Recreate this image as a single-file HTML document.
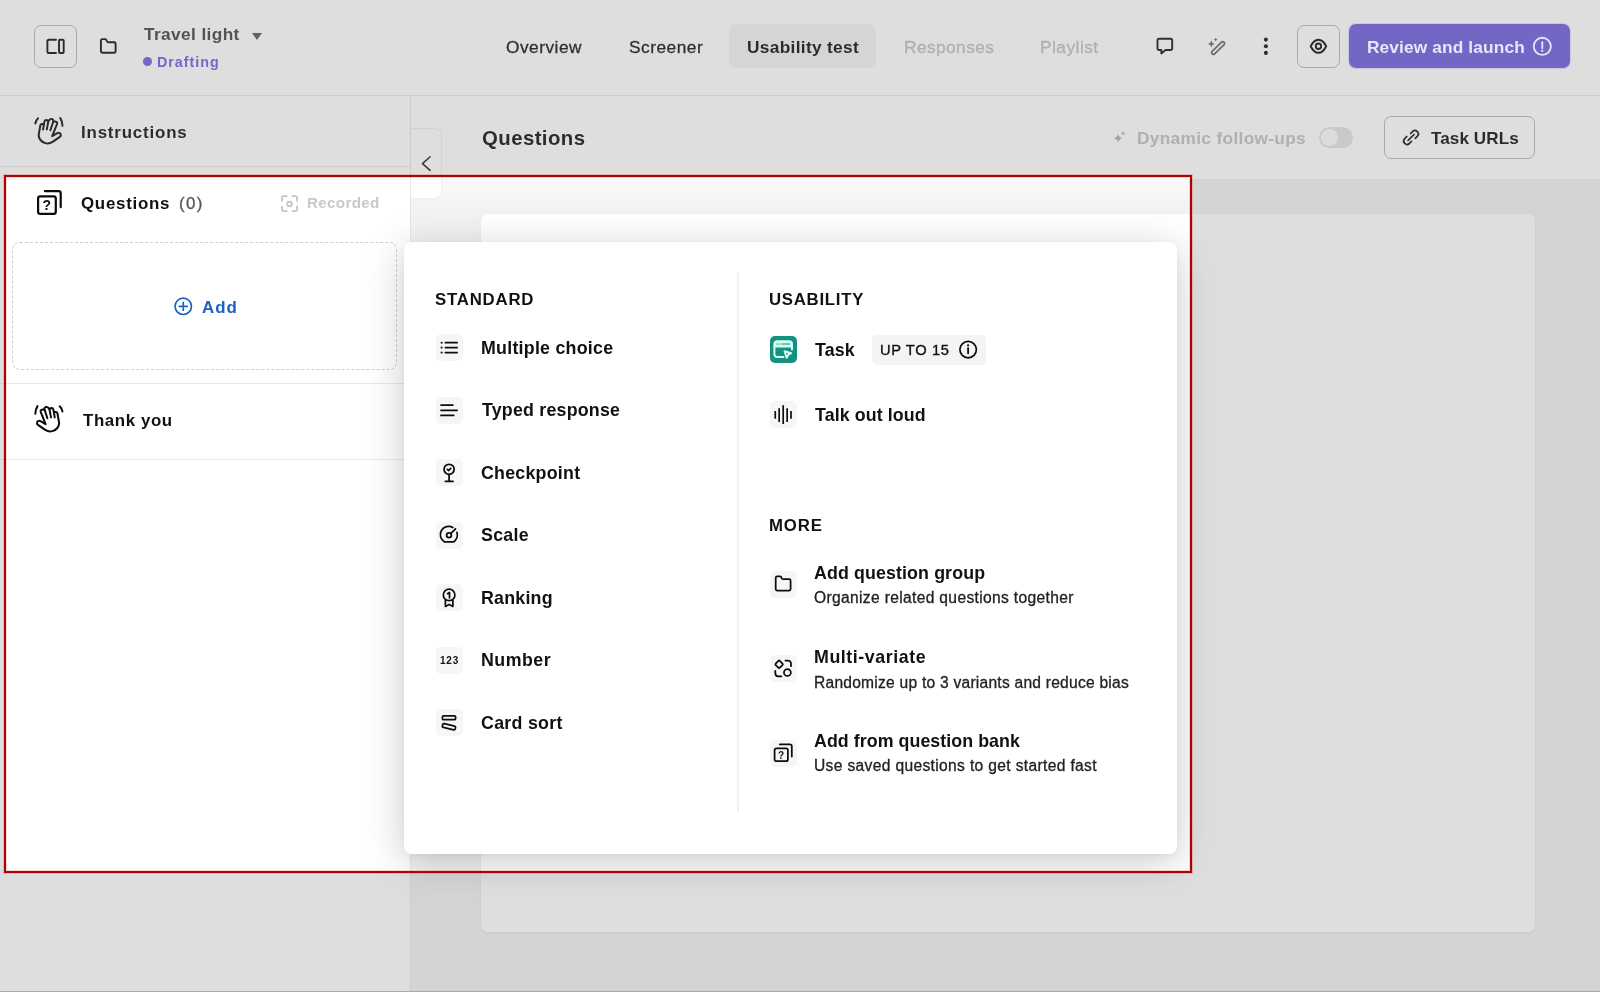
<!DOCTYPE html>
<html lang="en">
<head>
<meta charset="utf-8">
<title>Usability test - Questions</title>
<style>
*{box-sizing:border-box;margin:0;padding:0}
html,body{width:1600px;height:992px;overflow:hidden;background:#f2f2f2;font-family:"Liberation Sans",Arial,sans-serif}
.abs,.t,.i{position:absolute}
.t{white-space:nowrap;will-change:transform}
.i{display:block;overflow:visible}
#app{position:absolute;left:0;top:0;width:1600px;height:992px;overflow:hidden;background:#f2f2f2}
#topbar{left:0;top:0;width:1600px;height:96px;background:#fff;border-bottom:1px solid #e9e9e9}
#sidebar{left:0;top:96px;width:411px;height:896px;background:#fff;border-right:1px solid #e6e6e6}
#mainhead{left:411px;top:96px;width:1189px;height:83px;background:#fff}
#fade{left:411px;top:177px;width:779px;height:34px;background:linear-gradient(#fafafa,rgba(242,242,242,0))}
#card{left:481px;top:214px;width:1054px;height:718px;background:#fff;border-radius:7px;box-shadow:0 1px 3px rgba(0,0,0,.06)}
.sq{border:1px solid #b9b9b9;border-radius:7px;background:#fff}
.sep{left:0;width:410px;height:1px;background:#e9e9e9}
#pop{left:404px;top:242px;width:773px;height:612px;background:#fff;border-radius:8px;box-shadow:0 8px 40px rgba(0,0,0,.21),0 2px 8px rgba(0,0,0,.05)}
.ib{width:27px;height:27px;border-radius:5px;background:#f6f6f6}
.dim{background:rgba(124,124,124,.25)}
#red{left:4px;top:175px;width:1188px;height:698px;border:2px solid #a80404;box-shadow:0 0 0 1px rgba(255,70,70,.28),inset 0 0 0 1px rgba(255,70,70,.22)}
</style>
</head>
<body>
<div id="app">
  <div class="abs" id="topbar"></div>
  <div class="abs" id="sidebar"></div>
  <div class="abs" id="mainhead"></div>
  <div class="abs" id="fade"></div>
  <div class="abs" id="card"></div>

  <!-- top bar -->
  <div class="abs sq" style="left:34px;top:24.6px;width:43px;height:43px"></div>
  <div class="abs" style="left:729px;top:24px;width:147px;height:44px;border-radius:8px;background:#f3f3f3"></div>
  <div class="abs sq" style="left:1297px;top:24.6px;width:43px;height:43px"></div>
  <div class="abs" style="left:1349px;top:24px;width:221px;height:44px;border-radius:7px;background:#7060df;box-shadow:0 0 0 1px rgba(205,198,255,.55)"></div>
  <div class="abs" style="left:143.2px;top:57.4px;width:8.8px;height:8.8px;border-radius:50%;background:#7060e1"></div>
  <div class="abs" style="left:252px;top:33px;width:0;height:0;border-left:5.5px solid transparent;border-right:5.5px solid transparent;border-top:7px solid #5a5a5a"></div>

  <!-- sidebar -->
  <div class="abs sep" style="top:166px"></div>
  <div class="abs" style="left:12px;top:242px;width:385px;height:128px;border:1px dashed #cfcfcf;border-radius:8px"></div>
  <div class="abs sep" style="top:383px"></div>
  <div class="abs sep" style="top:459px"></div>

  <!-- collapse tab -->
  <div class="abs" style="left:411px;top:128px;width:31px;height:71px;background:#fff;border:1px solid #eeeeee;border-left:none;border-radius:0 7px 7px 0"></div>

  <!-- main header -->
  <div class="abs" style="left:1319px;top:127px;width:34px;height:21px;border-radius:11px;background:#e3e3e3"></div>
  <div class="abs" style="left:1321px;top:129px;width:17px;height:17px;border-radius:50%;background:#fdfdfd"></div>
  <div class="abs sq" style="left:1384px;top:116px;width:151px;height:43px"></div>

<div class="t" id="t1" style="left:144px;top:24.00px;font-size:17.3px;line-height:21px;font-weight:700;color:#464646;letter-spacing:0.374px">Travel light</div>
<div class="t" id="t2" style="left:157px;top:54.00px;font-size:14.3px;line-height:17px;font-weight:700;color:#7060e1;letter-spacing:0.981px">Drafting</div>
<div class="t" id="t3" style="left:506px;top:37.00px;font-size:17.3px;line-height:21px;font-weight:400;color:#141414;-webkit-text-stroke:.3px #141414;letter-spacing:0.506px">Overview</div>
<div class="t" id="t4" style="left:629px;top:37.00px;font-size:17.3px;line-height:21px;font-weight:400;color:#141414;-webkit-text-stroke:.3px #141414;letter-spacing:0.516px">Screener</div>
<div class="t" id="t5" style="left:747px;top:37.00px;font-size:17.3px;line-height:21px;font-weight:700;color:#111;letter-spacing:0.321px">Usability test</div>
<div class="t" id="t6" style="left:904px;top:37.00px;font-size:17.3px;line-height:21px;font-weight:400;color:#c1c1c1;-webkit-text-stroke:.3px #c1c1c1;letter-spacing:0.431px">Responses</div>
<div class="t" id="t7" style="left:1040px;top:37.00px;font-size:17.3px;line-height:21px;font-weight:400;color:#c1c1c1;-webkit-text-stroke:.3px #c1c1c1;letter-spacing:0.484px">Playlist</div>
<div class="t" id="t9" style="left:81px;top:123.00px;font-size:16.9px;line-height:20px;font-weight:700;color:#111;letter-spacing:0.820px">Instructions</div>
<div class="t" id="t10" style="left:81px;top:194.00px;font-size:16.9px;line-height:20px;font-weight:700;color:#111;letter-spacing:0.734px">Questions</div>
<div class="t" id="t11" style="left:179px;top:194.00px;font-size:16.9px;line-height:20px;font-weight:400;color:#555;-webkit-text-stroke:.3px #555;letter-spacing:1.346px">(0)</div>
<div class="t" id="t12" style="left:307px;top:194.00px;font-size:15.2px;line-height:18px;font-weight:700;color:#c9c9c9;letter-spacing:0.321px">Recorded</div>
<div class="t" id="t13" style="left:202px;top:298.00px;font-size:16.9px;line-height:20px;font-weight:700;color:#1a62c0;letter-spacing:0.961px">Add</div>
<div class="t" id="t14" style="left:83px;top:411.00px;font-size:16.9px;line-height:20px;font-weight:700;color:#111;letter-spacing:0.579px">Thank you</div>
<div class="t" id="t15" style="left:482px;top:126.00px;font-size:20.4px;line-height:24px;font-weight:700;color:#121212;letter-spacing:0.416px">Questions</div>
<div class="t" id="t16" style="left:1137px;top:128.00px;font-size:17.3px;line-height:21px;font-weight:700;color:#c2c2c2;letter-spacing:0.324px">Dynamic follow-ups</div>
<div class="t" id="t17" style="left:1431px;top:128.00px;font-size:17.1px;line-height:21px;font-weight:700;color:#111;letter-spacing:0.076px">Task URLs</div>
<svg class="i" style="left:0;top:0" width="1600" height="992" viewBox="0 0 1600 992" fill="none" stroke-linecap="round" stroke-linejoin="round">
  <!-- sidebar toggle -->
  <g stroke="#111" stroke-width="1.9">
    <path d="M56 39.7H49a1.6 1.6 0 0 0-1.6 1.6V51.4a1.6 1.6 0 0 0 1.6 1.6H56"/>
    <rect x="59" y="39.7" width="4.7" height="13.3" rx="1"/>
    <!-- folder -->
    <path d="M102.4 39.1H105q.9 0 1.3.8l.7 1.5q.4.8 1.3.8H114.1a1.5 1.5 0 0 1 1.5 1.5V51.3a1.5 1.5 0 0 1-1.5 1.5H102.4a1.5 1.5 0 0 1-1.5-1.5V40.6a1.5 1.5 0 0 1 1.5-1.5z"/>
  </g>
  <!-- comment -->
  <path stroke="#191919" stroke-width="1.9" d="M1159 38.8H1170.7a1.5 1.5 0 0 1 1.5 1.5V48.5a1.5 1.5 0 0 1-1.5 1.5H1165.6L1161.3 53.4V50H1159a1.5 1.5 0 0 1-1.5-1.5V40.3a1.5 1.5 0 0 1 1.5-1.5z"/>
  <!-- wand -->
  <g stroke="#666" stroke-width="1.750">
    <rect x="-8.2" y="-1.8" width="16.4" height="3.6" rx="1.6" transform="translate(1218.1 48) rotate(-44)"/>
  </g>
  <path fill="#6a6a6a" d="M1211.3 40.6q.5 2.9 3.4 3.4q-2.900 .5-3.400 3.400q-.5-2.900-3.400-3.400q2.900-.5 3.400-3.400z"/>
  <path fill="#6a6a6a" d="M1215.700 37.700q.3 1.600 1.900 1.900q-1.600 .3-1.900 1.900q-.3-1.600-1.900-1.900q1.600-.3 1.900-1.900z"/>
  <!-- dots -->
  <g fill="#161616"><circle cx="1265.900" cy="39.600" r="2.050"/><circle cx="1265.900" cy="46.250" r="2.050"/><circle cx="1265.900" cy="52.900" r="2.050"/></g>
  <!-- eye -->
  <g stroke="#111" stroke-width="1.900">
    <path d="M1310.700 46.250C1312.500 42.500 1315 39.700 1318.450 39.700C1321.900 39.700 1324.400 42.500 1326.200 46.250C1324.400 50 1321.900 52.800 1318.450 52.800C1315 52.800 1312.500 50 1310.700 46.250Z"/>
    <circle cx="1318.450" cy="46.250" r="2.700"/>
  </g>
  <!-- hand wave (instructions) -->
  <g id="hand" transform="translate(28 110)" stroke="#111" stroke-width="2">
    <path d="M10.600 25.500L12.300 15.500Q12.600 13.900 14 13.900L15.100 14Q15.700 14.100 15.800 14.700L16.500 11.500Q16.800 10.100 18.200 10.100L19.300 10.200Q20.300 10.400 20.300 11.500L21.300 10Q21.800 8.900 23.200 8.900L24.300 9.100Q25.500 9.500 25.300 10.800L25.200 11.800Q25.700 11.400 26.600 11.500L27.900 11.800Q29.500 12.300 29.100 13.800L24.200 26.200L29.300 23.100Q31.500 22.100 32.600 23.900Q33.400 25.600 31.800 26.900L24.600 31.900Q21 34.200 17.300 33.100Q11.600 31.400 10.600 25.500Z"/>
    <path d="M15.800 14.700L15.100 19.400M20.300 11.500L18.800 19.400M25.200 11.800L22.400 20.200"/>
    <path d="M10.100 8.300Q7.900 10.300 7.300 13.500M32.300 8.100Q34.400 11.500 34.500 15.700"/>
  </g>
  <!-- hand wave (thank you) mirrored -->
  <g transform="translate(69.800 398) scale(-1 1)" stroke="#0c0c0c" stroke-width="2">
    <path d="M10.600 25.500L12.300 15.500Q12.600 13.900 14 13.900L15.100 14Q15.700 14.100 15.800 14.700L16.500 11.500Q16.800 10.100 18.200 10.100L19.300 10.200Q20.300 10.400 20.300 11.500L21.300 10Q21.800 8.900 23.200 8.900L24.300 9.100Q25.500 9.500 25.300 10.800L25.200 11.800Q25.700 11.400 26.600 11.500L27.900 11.800Q29.500 12.300 29.100 13.800L24.200 26.200L29.300 23.100Q31.500 22.100 32.600 23.900Q33.400 25.600 31.800 26.900L24.600 31.900Q21 34.200 17.300 33.100Q11.600 31.400 10.600 25.500Z"/>
    <path d="M15.800 14.700L15.100 19.400M20.300 11.500L18.800 19.400M25.200 11.800L22.400 20.200"/>
    <path d="M10.100 8.300Q7.900 10.300 7.300 13.500M32.300 8.100Q34.400 11.500 34.500 15.700"/>
  </g>
  <!-- questions icon -->
  <g stroke="#0c0c0c" stroke-width="2.200">
    <rect x="38.100" y="196.300" width="17.700" height="17.600" rx="2.200"/>
    <path d="M44.900 191.100H58.700a2 2 0 0 1 2 2V207.200"/>
  </g>
  <text x="46.900" y="209.900" text-anchor="middle" font-family="Liberation Sans, Arial, sans-serif" font-size="14" font-weight="700" fill="#0c0c0c">?</text>
  <!-- recorded icon -->
  <g stroke="#c4c4c4" stroke-width="1.800">
    <path d="M282 200.900V197.700a1.500 1.500 0 0 1 1.500-1.500H286.700M292.400 196.200H295.600a1.500 1.500 0 0 1 1.500 1.500V200.900M297.100 206.400V209.600a1.500 1.500 0 0 1-1.500 1.500H292.400M286.700 211.100H283.500a1.500 1.500 0 0 1-1.500-1.500V206.400"/>
    <circle cx="289.550" cy="203.900" r="2.350"/>
  </g>
  <!-- add circle -->
  <g stroke="#1a62c0" stroke-width="1.700">
    <circle cx="183.250" cy="306.300" r="8.200"/>
    <path d="M179.300 306.300H187.200M183.250 302.350V310.250"/>
  </g>
  <!-- chevron -->
  <path stroke="#222" stroke-width="1.500" d="M430.100 156.800L422.500 163.600L430.100 170.400"/>
  <!-- sparkle -->
  <path fill="#b2b2b2" d="M1118.100 133.800q.7 3.700 4.400 4.400q-3.700 .7-4.400 4.400q-.7-3.700-4.400-4.400q3.700-.7 4.400-4.400z"/>
  <path fill="#b2b2b2" d="M1123 131q.35 1.950 2.300 2.300q-1.950 .35-2.300 2.300q-.35-1.950-2.300-2.300q1.950-.35 2.300-2.300z"/>
  <!-- link -->
  <g transform="translate(1390 118)" stroke="#151515" stroke-width="1.700">
    <path d="M18.100 22.400L24 16.500"/>
    <path d="M20.600 15.500L22.700 13.400A3.400 3.400 0 0 1 27.500 18.200L25.300 20.400"/>
    <path d="M21.500 23.400L19.400 25.500A3.400 3.400 0 0 1 14.600 20.700L16.800 18.500"/>
  </g>
</svg>


  <!-- popover -->
  <div class="abs" id="pop"></div>
  <div class="abs" style="left:737px;top:272px;width:2px;height:540px;background:#f1f1f1"></div>
  <div class="abs ib" style="left:436px;top:334px"></div>
  <div class="abs ib" style="left:436px;top:396.5px"></div>
  <div class="abs ib" style="left:436px;top:459px"></div>
  <div class="abs ib" style="left:436px;top:521.5px"></div>
  <div class="abs ib" style="left:436px;top:584px"></div>
  <div class="abs ib" style="left:436px;top:646.5px"></div>
  <div class="abs ib" style="left:436px;top:709px"></div>
  <div class="abs ib" style="left:770px;top:336px;background:#14917f"></div>
  <div class="abs" style="left:872px;top:334.5px;width:114px;height:30.5px;border-radius:5px;background:#f4f4f4"></div>
  <div class="abs ib" style="left:770px;top:401px"></div>
  <div class="abs ib" style="left:770px;top:571px"></div>
  <div class="abs ib" style="left:770px;top:655px"></div>
  <div class="abs ib" style="left:770px;top:739.5px"></div>
<div class="t" id="p1" style="left:435px;top:290.00px;font-size:16.8px;line-height:20px;font-weight:700;color:#111;letter-spacing:0.789px">STANDARD</div>
<div class="t" id="p2" style="left:481px;top:338.00px;font-size:17.8px;line-height:21px;font-weight:700;color:#111;letter-spacing:0.261px">Multiple choice</div>
<div class="t" id="p3" style="left:482px;top:400.00px;font-size:17.8px;line-height:21px;font-weight:700;color:#111;letter-spacing:0.220px">Typed response</div>
<div class="t" id="p4" style="left:481px;top:463.00px;font-size:17.8px;line-height:21px;font-weight:700;color:#111;letter-spacing:0.251px">Checkpoint</div>
<div class="t" id="p5" style="left:481px;top:525.00px;font-size:17.8px;line-height:21px;font-weight:700;color:#111;letter-spacing:0.272px">Scale</div>
<div class="t" id="p6" style="left:481px;top:588.00px;font-size:17.8px;line-height:21px;font-weight:700;color:#111;letter-spacing:0.233px">Ranking</div>
<div class="t" id="p7" style="left:481px;top:650.00px;font-size:17.8px;line-height:21px;font-weight:700;color:#111;letter-spacing:0.497px">Number</div>
<div class="t" id="p8" style="left:481px;top:713.00px;font-size:17.8px;line-height:21px;font-weight:700;color:#111;letter-spacing:0.287px">Card sort</div>
<div class="t" id="p9" style="left:769px;top:290.00px;font-size:16.8px;line-height:20px;font-weight:700;color:#111;letter-spacing:0.719px">USABILITY</div>
<div class="t" id="p10" style="left:815px;top:340.00px;font-size:17.8px;line-height:21px;font-weight:700;color:#111;letter-spacing:0.115px">Task</div>
<div class="t" id="p11" style="left:880px;top:341.00px;font-size:14.7px;line-height:18px;font-weight:400;color:#111;-webkit-text-stroke:.35px #111;letter-spacing:0.634px">UP TO 15</div>
<div class="t" id="p12" style="left:815px;top:405.00px;font-size:17.8px;line-height:21px;font-weight:700;color:#111;letter-spacing:0.107px">Talk out loud</div>
<div class="t" id="p13" style="left:769px;top:516.00px;font-size:16.8px;line-height:20px;font-weight:700;color:#111;letter-spacing:0.836px">MORE</div>
<div class="t" id="p14" style="left:814px;top:563.00px;font-size:17.8px;line-height:21px;font-weight:700;color:#111;letter-spacing:0.123px">Add question group</div>
<div class="t" id="p15" style="left:814px;top:588.00px;font-size:15.6px;line-height:19px;font-weight:400;color:#222;-webkit-text-stroke:.3px #222;letter-spacing:0.338px">Organize related questions together</div>
<div class="t" id="p16" style="left:814px;top:647.00px;font-size:17.8px;line-height:21px;font-weight:700;color:#111;letter-spacing:0.566px">Multi-variate</div>
<div class="t" id="p17" style="left:814px;top:673.00px;font-size:15.6px;line-height:19px;font-weight:400;color:#222;-webkit-text-stroke:.3px #222;letter-spacing:0.234px">Randomize up to 3 variants and reduce bias</div>
<div class="t" id="p18" style="left:814px;top:731.00px;font-size:17.8px;line-height:21px;font-weight:700;color:#111;letter-spacing:0.065px">Add from question bank</div>
<div class="t" id="p19" style="left:814px;top:756.00px;font-size:15.6px;line-height:19px;font-weight:400;color:#222;-webkit-text-stroke:.3px #222;letter-spacing:0.342px">Use saved questions to get started fast</div>
<div class="t" id="p20" style="left:440px;top:655.00px;font-size:10px;line-height:12px;font-weight:700;color:#111;letter-spacing:0.756px">123</div>
<svg class="i" style="left:0;top:0" width="1600" height="992" viewBox="0 0 1600 992" fill="none" stroke-linecap="round" stroke-linejoin="round">
  <g stroke="#0d0d0d" stroke-width="1.750">
    <!-- multiple choice -->
    <path d="M445.400 342.700H457.100M445.400 347.600H457.100M445.400 352.600H457.100"/>
    <!-- typed response -->
    <path d="M441 405.100H452.900M441 410.300H457.100M441 415.400H453.700"/>
    <!-- checkpoint -->
    <circle cx="449.100" cy="469.300" r="5.050"/>
    <path d="M449.100 474.400V481.300M445.300 481.300H453.100"/>
    <path d="M447.300 469.400L448.700 470.500L450.700 468.300"/>
    <!-- scale -->
    <path d="M452.800 527.500A8.300 8.300 0 1 0 444.500 541.900L453.500 541.900A8.300 8.300 0 0 0 456.900 532.300"/>
    <circle cx="449" cy="535.300" r="2.350"/>
    <path d="M450.700 533.600L455.500 528.800"/>
    <!-- ranking -->
    <circle cx="449.100" cy="594.900" r="5.800"/>
    <path d="M445.400 600V606.400L449.100 604.400L452.900 606.400V600"/>
    <path d="M447.500 593.700L449.500 592.400V597.800"/>
    <!-- card sort -->
    <rect x="442.400" y="715.800" width="13.200" height="3.900" rx="1.300"/>
    <rect x="-6.600" y="-1.950" width="13.200" height="3.900" rx="1.300" transform="translate(448.950 726.750) rotate(13)"/>
    <!-- talk out loud -->
    <path stroke-linecap="butt" stroke-width="1.700" d="M775.250 411.100V418.700M779.150 408.200V421.900M783.200 405.300V423.900M787.150 408.200V421.900M791 411.100V418.700"/>
    <!-- folder -->
    <path d="M777.200 576.400H780q1 0 1.400.9l.4 1q.4.900 1.400.9H789.100a1.500 1.500 0 0 1 1.500 1.500V589.100a1.500 1.500 0 0 1-1.500 1.500H777.200a1.500 1.500 0 0 1-1.500-1.500V577.900a1.500 1.500 0 0 1 1.500-1.500z"/>
    <!-- multi-variate -->
    <rect x="-2.900" y="-2.900" width="5.800" height="5.800" rx="1" transform="translate(779.100 664.300) rotate(45)"/>
    <circle cx="787.400" cy="672.500" r="3.450"/>
    <path d="M785.400 660.600H788a3 3 0 0 1 3 3V666.200M775.300 670.800V673.300a3 3 0 0 0 3 3H781.400"/>
    <!-- question bank -->
    <rect x="774.600" y="748.300" width="13.300" height="12.900" rx="2"/>
    <path d="M779.800 744.400H789.800a2 2 0 0 1 2 2V756.500"/>
    <!-- info -->
    <circle cx="968.150" cy="349.600" r="8.250"/>
    <path stroke-width="1.800" d="M968.100 348.200V353.300"/>
  </g>
  <g fill="#111">
    <circle cx="441.600" cy="342.700" r="1.050"/><circle cx="441.600" cy="347.600" r="1.050"/><circle cx="441.600" cy="352.600" r="1.050"/>
    <circle cx="968.100" cy="345.400" r="1.100"/>
  </g>
  <text x="781.100" y="758.500" text-anchor="middle" font-family="Liberation Sans, Arial, sans-serif" font-size="10" font-weight="700" fill="#111">?</text>
  <!-- task icon -->
  <g stroke="#d3fff6" stroke-width="2">
    <path d="M783.500 357.100H777.400a3 3 0 0 1-3-3V344.200a3 3 0 0 1 3-3H789a3 3 0 0 1 3 3V349.500"/>
    <path d="M774.400 346.600H792"/>
    <path fill="#0f8d7a" d="M784.600 351.200L791.200 353.200L788.300 354.700L786.700 357.700Z"/>
  </g>
  <path fill="#d3fff6" d="M774.400 346.600V344.200a3 3 0 0 1 3-3H789a3 3 0 0 1 3 3V346.600z"/>
  <path stroke="#0f8d7a" stroke-width="1.100" d="M776.800 344H777.300M779 344H779.500M781.600 344H789.800"/>
</svg>


  <!-- dim overlay with hole -->
  <div class="abs dim" style="left:0;top:0;width:1600px;height:175px"></div>
  <div class="abs dim" style="left:0;top:873px;width:1600px;height:119px"></div>
  <div class="abs dim" style="left:0;top:175px;width:4px;height:698px"></div>
  <div class="abs dim" style="left:1192px;top:175px;width:408px;height:698px"></div>
<div class="t" id="t8" style="left:1367px;top:37.00px;font-size:17.3px;line-height:21px;font-weight:700;color:#e9e5fa;letter-spacing:0.135px">Review and launch</div>
  <svg class="i" style="left:1530px;top:34px" width="25" height="25" viewBox="1530 34 25 25" fill="none" stroke-linecap="round">
    <circle cx="1542.3" cy="46.35" r="8.6" stroke="#e9e5fa" stroke-width="1.8"/>
    <path d="M1542.3 42.200V48.200" stroke="#e9e5fa" stroke-width="1.8"/>
    <circle cx="1542.3" cy="50.8" r="1.15" fill="#e9e5fa"/>
  </svg>
  <div class="abs" id="red"></div>
  <div class="abs" style="left:0;top:991px;width:1600px;height:1px;background:#a9a9a9"></div>
</div>
</body>
</html>
